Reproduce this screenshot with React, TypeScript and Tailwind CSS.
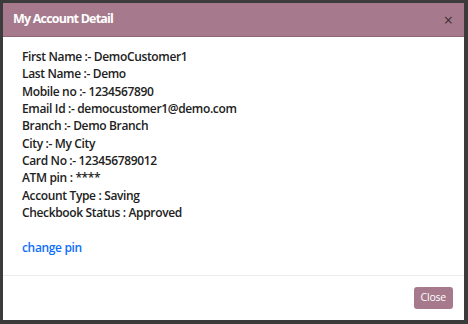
import React from "react";

const details: [string, string][] = [
  ["First Name :-", "DemoCustomer1"],
  ["Last Name :-", "Demo"],
  ["Mobile no :-", "1234567890"],
  ["Email Id :-", "democustomer1@demo.com"],
  ["Branch :-", "Demo Branch"],
  ["City :-", "My City"],
  ["Card No :-", "123456789012"],
  ["ATM pin :", "****"],
  ["Account Type :", "Saving"],
  ["Checkbook Status :", "Approved"],
];

export default function App() {
  return (
    <div
      className="h-[324px] w-[468px] overflow-hidden bg-[#3b3b3b] pl-[3px] pt-[3px]"
      style={{ fontFamily: '"Open Sans", "Noto Sans", sans-serif' }}
    >
      <div className="flex h-[317px] w-[461px] flex-col bg-white">
        <header className="flex h-[34px] shrink-0 items-center justify-between border-b border-[#8e6577] bg-[#a67a8c] pl-[10px] pr-[11px]">
          <h1 className="text-[12.5px] font-bold tracking-[-0.8px] text-white">My Account Detail</h1>
          <span className="text-[16px] leading-none text-[#3d2f36]">×</span>
        </header>

        <main className="flex-1 px-[19px] pt-[11px] text-[12px] font-semibold leading-[17.33px] tracking-[-0.35px] text-[#212121]">
          {details.map(([label, value]) => (
            <p key={label}>
              {label} {value}
            </p>
          ))}
          <p>&nbsp;</p>
          <a className="text-[#0d6efd]">change pin</a>
        </main>

        <footer className="flex h-[45px] shrink-0 items-center justify-end border-t border-[#ececec] px-[11px]">
          <button
            type="button"
            className="h-[22px] rounded-[3px] bg-[#a67a8c] px-[7px] text-[10.5px] tracking-[-0.2px] text-white"
          >
            Close
          </button>
        </footer>
      </div>
    </div>
  );
}
